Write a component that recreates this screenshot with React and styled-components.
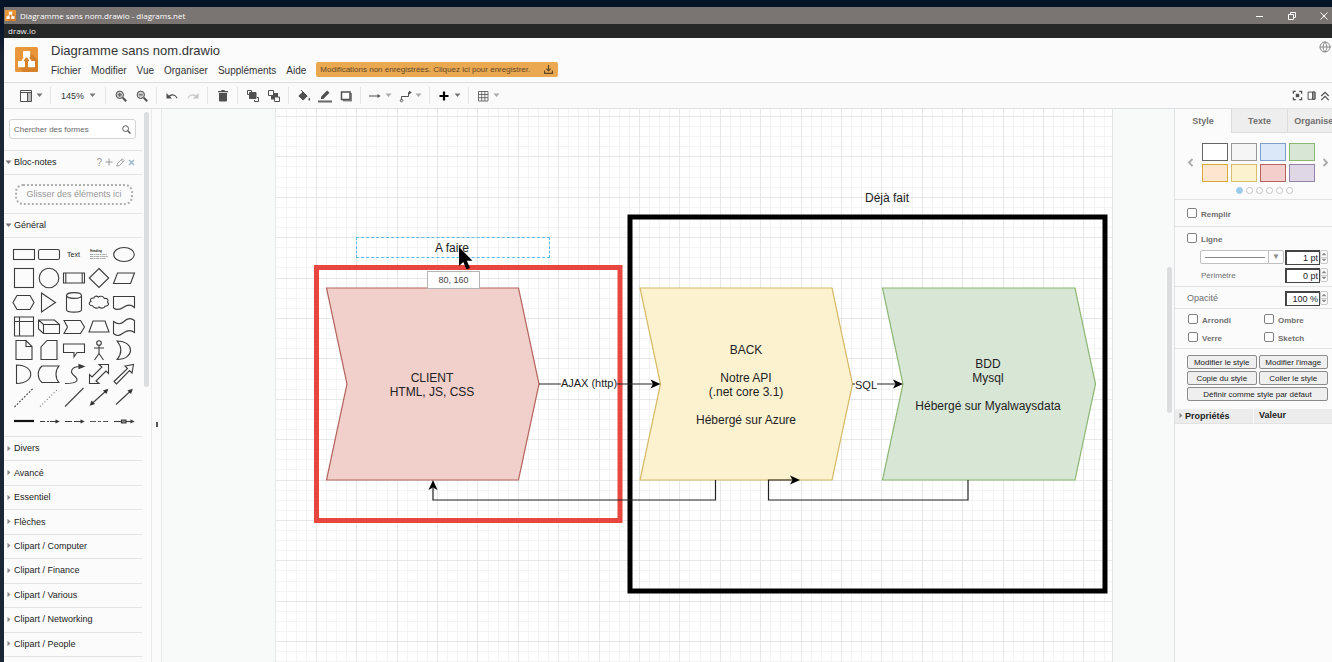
import React from 'react';
import styled, { createGlobalStyle } from 'styled-components';
import { Globe } from 'lucide-react';

const Global = createGlobalStyle`
  * { box-sizing: border-box; }
  html, body, #root { height: 100%; }
  body { margin: 0; overflow: hidden; background: #0a1626; }
  body, button, input, select { font-family: "Liberation Sans", Arial, sans-serif; }
  button { border: 0; background: none; padding: 0; color: inherit; font-size: inherit; }
  svg { display: block; flex: none; }
`;

/* ---------- window frame ---------- */

const Desktop = styled.div`
  display: flex;
  flex-direction: column;
  height: 100vh;
  padding: 7px 0 0 4px;
  overflow: hidden;
  background: linear-gradient(#061428 0, #061428 24px, #1c2636 60px);
`;

const TitleBar = styled.header`
  display: flex;
  align-items: center;
  flex: none;
  height: 17px;
  padding-left: 1px;
  background: #7a7573;
  color: #fff;
  font-family: "Open Sans", "Noto Sans", sans-serif;
  font-size: 8px;
`;

const WindowTitle = styled.span`
  flex: 1;
  margin-left: 4px;
  white-space: nowrap;
`;

const WindowButtons = styled.div`
  display: flex;
  margin-right: -8px;
`;

const WindowButton = styled.button`
  display: flex;
  align-items: center;
  justify-content: center;
  width: 32px;
  height: 17px;
`;

const AppBar = styled.div`
  display: flex;
  align-items: center;
  flex: none;
  height: 14px;
  padding: 0 0 2px 4px;
  background: #262828;
  color: #eee;
  font-family: "Open Sans", "Noto Sans", sans-serif;
  font-size: 8px;
`;

/* ---------- application header ---------- */

const Header = styled.div`
  display: flex;
  flex: none;
  height: 45px;
  padding: 0 1px 0 11px;
  background: #fbfbfc;
  border-bottom: 1px solid #dadce0;
`;

const LogoSlot = styled.div`
  padding-top: 9px;
  width: 36px;
`;

const HeaderText = styled.div`
  flex: 1;
  padding-top: 5px;
`;

const DocTitle = styled.h1`
  margin: 0;
  font-size: 13px;
  line-height: 16px;
  font-weight: 400;
  color: #333;
`;

const MenuBar = styled.nav`
  display: flex;
  align-items: center;
  gap: 10px;
  margin-top: 3px;
  height: 16px;
  font-size: 10px;
  color: #333;
`;

const SaveNotice = styled.button`
  display: flex;
  align-items: center;
  justify-content: space-between;
  width: 242px;
  height: 15px;
  margin-bottom: 2px;
  padding: 0 5px 0 4px;
  border-radius: 2px;
  background: #eaa851;
  color: #5f4828;
  font-size: 8px;
`;

const Language = styled.button`
  align-self: flex-start;
  margin-top: 3px;
  color: #8a8a8a;
`;

/* ---------- toolbar ---------- */

const Toolbar = styled.div`
  display: flex;
  align-items: center;
  flex: none;
  height: 26px;
  padding: 0 0 0 8px;
  background: #fafafa;
  border-bottom: 1px solid #dfe1e5;
  color: #505050;
`;

const ToolGroup = styled.div`
  display: flex;
  align-items: center;
  height: 17px;
  padding: 0 4px;
  border-right: ${(p) => (p.$last ? '0' : '1px solid #e4e4e4')};
`;

const ToolButton = styled.button`
  display: flex;
  align-items: center;
  justify-content: ${(p) => (p.$menu ? 'flex-start' : 'center')};
  gap: 2px;
  width: ${(p) => (p.$menu ? '30px' : '21px')};
  padding-left: ${(p) => (p.$menu ? '2px' : '0')};
  height: 17px;
  opacity: ${(p) => (p.$dim ? 0.3 : 1)};
`;

const ZoomButton = styled.button`
  display: flex;
  align-items: center;
  justify-content: space-between;
  width: 46px;
  padding: 0 5px 0 6px;
  font-size: 9px;
  line-height: 12px;
  color: #333;
`;

const ToolSpacer = styled.div`
  flex: 1;
`;

const ViewButton = styled.button`
  display: flex;
  align-items: center;
  justify-content: center;
  width: 14px;
`;

/* ---------- body ---------- */

const Body = styled.main`
  display: flex;
  flex: 1;
  min-height: 0;
`;

const Sidebar = styled.aside`
  display: flex;
  flex: none;
  width: 148px;
  background: #fbfbfb;
  border-right: 1px solid #e9e9e9;
`;

const SidebarList = styled.div`
  display: flex;
  flex-direction: column;
  width: 138px;
  font-size: 9px;
  color: #222;
`;

const ScrollThumb = styled.div`
  width: 5px;
  height: ${(p) => p.$length}px;
  margin: ${(p) => p.$top}px 0 0 2px;
  border-radius: 3px;
  background: #dcdddf;
`;

const SearchArea = styled.div`
  height: 42px;
  padding: 10px 6px 0 5px;
  border-bottom: 1px solid #e2e2e2;
`;

const SearchBox = styled.label`
  display: flex;
  align-items: center;
  height: 20px;
  padding: 0 4px;
  border: 1px solid #d4d4d4;
  border-radius: 3px;
  background: #fff;
  color: #555;
`;

const SearchInput = styled.input`
  flex: 1;
  min-width: 0;
  padding: 0;
  border: 0;
  outline: 0;
  background: none;
  font-size: 8px;
  &::placeholder { color: #666; opacity: 1; }
`;

const Section = styled.div`
  display: flex;
  align-items: center;
  flex: ${(p) => (p.$grow ? '1' : 'none')};
  height: ${(p) => (p.$grow ? 'auto' : '24px')};
  padding: 0 7px 1px 1px;
  border-bottom: 1px solid #e4e4e4;
`;

const SectionButton = styled.button`
  display: flex;
  align-items: center;
  flex: 1;
  gap: 2px;
  text-align: left;
`;

const SectionTools = styled.div`
  display: flex;
  align-items: center;
  gap: 3px;
  color: #999;
  font-size: 10px;
`;

const DropZone = styled.div`
  height: 39px;
  padding: 9px 9px 0 11px;
  border-bottom: 1px solid #e4e4e4;
`;

const DropHint = styled.div`
  height: 21px;
  border: 2px dotted #b0b0b0;
  border-radius: 8px;
  color: #999;
  line-height: 17px;
  text-align: center;
`;

const ShapeGrid = styled.div`
  display: grid;
  grid-template-columns: repeat(5, 25px);
  grid-auto-rows: 24px;
  padding: 4px 0 2px 7px;
  border-bottom: 1px solid #e4e4e4;
`;

const MoreSections = styled.div`
  display: flex;
  flex-direction: column;
  flex: 1;
  padding-bottom: 5px;
`;

const Splitter = styled.div`
  display: flex;
  align-items: center;
  justify-content: center;
  flex: none;
  width: 10px;
  padding-top: 77px;
  border-right: 1px solid #e9e9e9;
  background: #fbfbfb;
`;

const SplitterGrip = styled.span`
  width: 2px;
  height: 5px;
  background: #555;
`;

const Canvas = styled.section`
  display: flex;
  flex: 1;
  min-width: 0;
  overflow: hidden;
  background: #f8f9f9;
`;

const Gutter = styled.div`
  display: flex;
  justify-content: flex-end;
  flex: ${(p) => p.$weight};
  padding-right: 2px;
`;

const Page = styled.div`
  position: relative;
  flex: 0 0 838px;
  overflow: hidden;
  background: #fff;
  border-right: 1px solid #e2e2e2;
`;

const NodeLabel = styled.div`
  position: absolute;
  left: ${(p) => p.$x}px;
  top: ${(p) => p.$y}px;
  transform: translateX(-50%);
  color: #222;
  font-size: ${(p) => (p.$edge ? '11px' : '12px')};
  line-height: 14px;
  text-align: center;
  white-space: pre;
  background: ${(p) => (p.$edge ? '#fff' : 'none')};
`;

const DragOutline = styled.div`
  position: absolute;
  left: 81px;
  top: 128px;
  width: 194px;
  height: 21px;
  border: 1px dashed #5bbde8;
`;

const PositionHint = styled.div`
  position: absolute;
  left: 152px;
  top: 162px;
  width: 53px;
  height: 18px;
  border: 1px solid #b4b4b4;
  background: #fff;
  color: #444;
  font-size: 9px;
  line-height: 17px;
  text-align: center;
`;

const Pointer = styled.svg`
  position: absolute;
  left: 183px;
  top: 137px;
`;

/* ---------- format panel ---------- */

const FormatPanel = styled.aside`
  flex: none;
  width: 158px;
  overflow: hidden;
  background: #fbfbfb;
  border-left: 1px solid #dfe1e5;
  color: #707070;
  font-size: 9px;
`;

const Tabs = styled.div`
  display: flex;
  height: 24px;
`;

const Tab = styled.button`
  flex: 0 0 56px;
  border: solid #dcdcdc;
  border-width: ${(p) => (p.$active ? '0' : '0 0 1px 1px')};
  background: ${(p) => (p.$active ? '#fbfbfb' : '#eeeeee')};
  font-weight: 700;
  color: #707070;
`;

const Block = styled.div`
  padding: ${(p) => p.$pad || '0 4px 0 12px'};
  height: ${(p) => p.$h}px;
  border-bottom: 1px solid #e2e2e2;
`;

const Palette = styled.div`
  display: flex;
  align-items: center;
  justify-content: space-between;
`;

const Swatches = styled.div`
  display: grid;
  grid-template-columns: repeat(4, 26px);
  grid-auto-rows: 18px;
  gap: 3px;
`;

const Swatch = styled.button`
  border: 1px solid ${(p) => p.$line};
  background: ${(p) => p.$fill};
`;

const Dots = styled.div`
  display: flex;
  justify-content: center;
  gap: 3px;
  margin-top: 5px;
  padding-left: 12px;
`;

const Dot = styled.button`
  width: 7px;
  height: 7px;
  border: 1px solid ${(p) => (p.$on ? '#9bcbea' : '#c4c4c4')};
  border-radius: 50%;
  background: ${(p) => (p.$on ? '#9bcbea' : '#fff')};
`;

const Row = styled.div`
  display: flex;
  align-items: center;
  height: 18px;
`;

const Check = styled.label`
  display: flex;
  align-items: center;
  flex: 0 0 76px;
  gap: 4px;
  font-size: 8px;
  font-weight: 700;
`;

const CheckInput = styled.input`
  appearance: none;
  width: 10px;
  height: 10px;
  margin: 0 0 2px;
  border: 1px solid #808080;
  border-radius: 2px;
  background: #fff;
`;

const FieldLabel = styled.label`
  flex: 1;
  padding-left: ${(p) => (p.$indent ? '14px' : '0')};
  font-size: ${(p) => (p.$indent ? '8px' : '9px')};
`;

const LineSelect = styled.div`
  display: flex;
  align-items: center;
  flex: 1;
  height: 14px;
  margin: 0 1px 0 13px;
  border: 1px solid #c0c0c0;
  border-radius: 2px;
  background: #fff;
`;

const LineStyle = styled.select`
  flex: 1;
  min-width: 0;
  height: 12px;
  appearance: none;
  border: 0;
  border-right: 1px solid #c0c0c0;
  background: linear-gradient(#888, #888) center / 60px 1px no-repeat;
`;

const Caret = styled.span`
  width: 14px;
  color: #888;
  font-size: 8px;
  line-height: 10px;
  text-align: center;
`;

const NumberInput = styled.input`
  width: 35px;
  height: 15px;
  padding: 0 1px;
  border: solid #444;
  border-width: 2px 1px 1px 2px;
  background: #fff;
  color: #222;
  font-size: 9px;
  text-align: right;
`;

const Stepper = styled.div`
  display: flex;
  flex-direction: column;
  width: 8px;
  height: 14px;
  border: 1px solid #c8c8c8;
  border-radius: 2px;
`;

const Step = styled.button`
  display: flex;
  align-items: center;
  justify-content: center;
  flex: 1;
  & + & { border-top: 1px solid #d0d0d0; }
`;

const ActionGrid = styled.div`
  display: grid;
  grid-template-columns: 1fr 1fr;
  grid-auto-rows: 14px;
  gap: 2px;
  padding: 6px 4px 8px 12px;
`;

const Action = styled.button`
  grid-column: ${(p) => (p.$wide ? '1 / -1' : 'auto')};
  border: 1px solid #8c8c8c;
  border-radius: 2px;
  background: #efefef;
  color: #222;
  font-size: 8px;
  white-space: nowrap;
`;

const PropTable = styled.table`
  width: 100%;
  border-collapse: collapse;
  table-layout: fixed;
  color: #222;
  text-align: left;
  border-bottom: 1px solid #e2e2e2;
`;

const PropHead = styled.th`
  height: 14px;
  padding: 0 0 0 ${(p) => (p.$divided ? '5px' : '2px')};
  background: #ececec;
  border-left: ${(p) => (p.$divided ? '1px solid #f8f8f8' : '0')};
  font-size: 9px;
  line-height: 13px;
`;

const PropToggle = styled.button`
  display: flex;
  align-items: center;
  gap: 1px;
  font-weight: 700;
`;

/* ---------- icons ---------- */

const Down = ({ c = '#777' }) => (
  <svg width="7" height="5" viewBox="0 0 7 5"><path d="M0.5 .5h6L3.5 4z" fill={c} /></svg>
);
const Right = () => (
  <svg width="7" height="7" viewBox="0 0 7 7"><path d="M2.5 .8v5.4L5.4 3.5z" fill="#888" /></svg>
);
const Tiny = ({ up }) => (
  <svg width="6" height="4" viewBox="0 0 6 4"><path d={up ? 'M.5 3.2h5L3 .8z' : 'M.5 .8h5L3 3.2z'} fill="#888" /></svg>
);
const Icon = ({ children, size = 16, sw = 1 }) => (
  <svg width={size} height={size} viewBox="0 0 16 16" fill="none" stroke="currentColor" strokeWidth={sw}>{children}</svg>
);

const Logo = ({ w, h }) => (
  <svg width={w} height={h} viewBox="0 0 23 25" preserveAspectRatio="none">
    <rect width="23" height="25" rx="1.5" fill="#e9963a" />
    <path d="M14.5 5 23 13v10.500q0 1.500-1.500 1.500H8.500L4 20l7-9z" fill="#d5802a" />
    <path d="M10.800 9 6 16M12.200 9l4.600 7" stroke="#fff" strokeWidth="1.700" />
    <rect x="8" y="4" width="7.200" height="6.500" rx=".8" fill="#fff" />
    <rect x="3" y="14" width="7" height="6.300" rx=".8" fill="#fff" />
    <rect x="13" y="14" width="7" height="6.300" rx=".8" fill="#fff" />
  </svg>
);

const PanelIcon = () => (
  <Icon><path d="M2.500 2.500h11v11h-11zM2.500 4.500h11" /><path d="M9.500 4.500v9" /><path d="M10 5h3v8h-3z" fill="#bbb" stroke="none" /></Icon>
);
const Lens = ({ plus }) => (
  <Icon><circle cx="6.800" cy="6.800" r="3.700" fill="#ccc" /><path d="m9.800 9.800 3.400 3.400" strokeWidth="2" /><path d={plus ? 'M4.800 6.800h4M6.800 4.800v4' : 'M4.800 6.800h4'} /></Icon>
);
const UndoIcon = ({ flip }) => (
  <Icon><g transform={flip ? 'translate(16 0) scale(-1 1)' : undefined} stroke="none" fill="currentColor"><path d="M2.500 5v5.500H8L6 8.500c2.500-1.800 5.300-.8 6.600 2l1-.4C12 6.500 8 5.200 4.900 7.400z" /></g></Icon>
);
const TrashIcon = () => (
  <Icon><path d="M4 5h8v7.500q0 1-1 1H5q-1 0-1-1zM3 2.900h3l.7-.9h2.600l.7.9h3V4.200H3z" fill="currentColor" stroke="none" /></Icon>
);
const FrontIcon = () => (
  <Icon><path d="M2.500 2.500h4v4h-4z" fill="#fafafa" /><path d="M4.500 4.500h6.500v6h-6.500z" fill="currentColor" /><path d="M9.500 12v1.500h4V9.500H12" /></Icon>
);
const BackIcon = () => (
  <Icon><path d="M5 5h7v6.500H5z" fill="currentColor" stroke="none" /><path d="M2.500 2.500h5v5h-5zM8.500 9h5v4.500h-5z" fill="#fafafa" /></Icon>
);
const FillIcon = () => (
  <Icon><path d="M2.800 8 7 4 11.200 8 7.200 12z" fill="currentColor" /><path d="M5 2l3 3" /><path d="M13.300 9.500q1.700 2.400 0 3.300-1.700-.9 0-3.300z" fill="currentColor" stroke="none" /></Icon>
);
const StrokeIcon = () => (
  <Icon><path d="M1 12.500h14v2H1z" fill="#666" stroke="none" /><path d="M4 11V8.800L10 2.500l2.500 2.200L6.300 11z" fill="currentColor" stroke="none" /></Icon>
);
const ShadowIcon = () => (
  <Icon><path d="M4 5h10v8.500H5z" fill="#888" stroke="none" /><path d="M3.500 4h8.500v7.500H3.500z" fill="#fff" strokeWidth="1.500" /></Icon>
);
const ArrowIcon = () => (
  <Icon><path d="M2 8h9" /><path d="m10.500 6 3 2-3 2z" fill="currentColor" stroke="none" /></Icon>
);
const ConnectorIcon = () => (
  <Icon><path d="M4.500 11.500V8.500h7v-4h2" /><circle cx="4.500" cy="12.500" r="1.200" /><path d="m12 2.500 2.800 2-2.800 2z" fill="currentColor" stroke="none" /></Icon>
);
const PlusIcon = () => (
  <Icon><path d="M8 3.500v9M3.500 8h9" stroke="#000" strokeWidth="2.200" /></Icon>
);
const TableIcon = () => (
  <Icon><path d="M3.500 3.500h9.500v9.500h-9.500zM3.500 6.500h9.500M3.500 9.700h9.500M6.700 3.500v9.500M9.900 3.500v9.500" strokeWidth=".8" /></Icon>
);
const FitIcon = () => (
  <Icon size={11} sw={1.800}><path d="M2 5.500V2h3.500M10.500 2H14v3.500M14 10.500V14h-3.500M5.500 14H2v-3.500" /><path d="M5.500 5.500h5v5h-5z" fill="currentColor" stroke="none" /></Icon>
);
const FormatIcon = () => (
  <Icon size={11} sw={1.400}><path d="M3 3h10v10.500H3z" /><path d="M9.500 3h3.500v10.500H9.500z" fill="#999" /></Icon>
);
const CollapseIcon = () => (
  <Icon size={12} sw={1.600}><path d="m3 8 5-5 5 5M3 13.500l5-5 5 5" /></Icon>
);

/* One entry per palette cell, drawn in a 25 x 24 box. */
const SHAPES = [
  <rect x="2.500" y="7.500" width="21" height="10" />,
  <rect x="2.500" y="7.500" width="21" height="10" rx="1.800" />,
  <text x="12.500" y="15" fontSize="7" textAnchor="middle" fill="#222" stroke="none">Text</text>,
  <g><text x="4" y="10" fontSize="3" fontWeight="700" fill="#222" stroke="none">Heading</text><path d="M4 12.500h17M4 14.500h18M4 16.500h16" stroke="#888" strokeWidth=".7" strokeDasharray="3 .6 2 .5" /></g>,
  <ellipse cx="13" cy="12.500" rx="10.300" ry="7" />,
  <rect x="3.500" y="2.500" width="19" height="19" />,
  <circle cx="13" cy="12" r="9.800" />,
  <path d="M2.500 7h21v10h-21zM4.800 7v10M21.200 7v10" />,
  <path d="m13 2.500 9.700 9.500-9.700 9.500L3.300 12z" />,
  <path d="M6.500 7h17l-4 10.500h-17z" />,
  <path d="M6 5.500h13l4 7-4 7H6l-4-7z" />,
  <path d="m5.500 3 14 9.500-14 9.500z" />,
  <g><path d="M5.500 5.500v14c0 3.500 15 3.500 15 0v-14" /><ellipse cx="13" cy="5.500" rx="7.500" ry="2.900" /></g>,
  <path d="M8 8c-3-.3-4.500 1.500-3 3.500-3 1-1.800 4.500 1.500 4.300 1.500 3 5.500 2.800 6.500 1.200 2.500 2 5.500 1 6-.8 3.500.2 4.500-2.500 2.500-4 1.500-2.500-.5-4.300-3-3.700C17 5.800 13.500 5.800 12.300 7.200 11 5.500 8 6 8 8z" />,
  <path d="M2.500 6.500h21v11c-4-3.500-7-3-10.500-.5s-7 3.500-10.500 1z" />,
  <path d="M3.500 3h19v19h-19zM3.500 7.500h19M8.500 3v19" />,
  <path d="M2.500 6h16l5 4.500v9h-16l-5-4.500zM2.500 6l5 4.500h16M7.500 10.500v9" />,
  <path d="M3 6.500h16.500l4 6.500-4 6.500H3L6.500 13z" />,
  <path d="M7 7h12l4 11H3z" />,
  <path d="M2.500 7.500c4 3 8 2.500 10.500 0s6.500-4 10.500-1v12c-4-3-7.500-2-10.500 0s-6.500 5-10.500 1z" />,
  <path d="M5 2.500h10l6 6v13H5zM15 2.500v6h6" />,
  <path d="M11 2.500h10v19H5V9z" />,
  <path d="M2.500 6h21v8.500h-7.500l-3 4.500v-4.500H2.500z" />,
  <g><circle cx="13" cy="5" r="2.300" /><path d="M13 7.500v8M8 10h10M13 15.500l-4.500 6.500M13 15.500l4.500 6.500" /></g>,
  <path d="M6 3c18 0 18 18.500 0 18.500 5-6 5-12.500 0-18.500z" />,
  <path d="M5.500 3c19 0 19 18.500 0 18.500z" />,
  <path d="M6 4h17c-4 4.500-4 12 0 16.500H6C1 16 1 8.500 6 4z" />,
  <g><path d="M4 21.500c14 0 14-4 9-8s-2-9 6-9" /><path d="m18 2.500 5 2-5 2z" fill="#333" /></g>,
  <path d="M3.500 21.500v-9l2.500 2.500L16 5l-3-2.500h9.500v9l-2.500-2.500-10 10 3 2.500z" />,
  <path d="M3 19.500 16.500 6.500 14 4l8.500-1.500L21 11l-2.500-2.500L5.500 22z" />,
  <path d="M3.500 21 22.500 2" strokeDasharray="1.800 1.600" />,
  <path d="M4 20.500 22 3" strokeDasharray="1 2.200" stroke="#777" />,
  <path d="M4 20.500 22.500 2" />,
  <g><path d="M6 17.500 20 5" /><path d="m4.500 19 1.200-3.600 2.400 2.400zM21.500 3.500l-1.200 3.600-2.400-2.400z" fill="#111" /></g>,
  <g><path d="M5 18.500 19 5.500" /><path d="m21 3.500-1.200 3.600-2.400-2.400z" fill="#111" /></g>,
  <path d="M3 11h20" strokeWidth="2.200" stroke="#111" />,
  <g><path d="M4 11.500h5M11 11.500h2M14 11.500h7" /><path d="m20 10.300 2.500 1.200-2.500 1.200z" fill="#111" /></g>,
  <g><path d="M4 11.500h7M13 11.500h8" /><path d="m20 10.300 2.500 1.200-2.500 1.200z" fill="#111" /></g>,
  <g><path d="M4 11.500h6M12 11.500h3M17 11.500h5" stroke="#555" /></g>,
  <g><path d="M3 11.500h18" /><path d="M10.500 10h4.500v3h-4.500zM20 10.300l2.500 1.200-2.500 1.200z" fill="#888" /></g>,
];

/* ---------- diagram ---------- */

const steps = (from, pitch, end) => {
  const out = [];
  for (let i = 0; from + i * pitch < end; i += 1) out.push({ at: Math.round(from + i * pitch) + 0.5, major: i % 4 === 0 });
  return out;
};

const GridLines = () => {
  const lines = [
    ...steps(0.4, 10.1, 840).map((l) => ({ ...l, d: `M${l.at} 0v1400` })),
    ...steps(-33.5, 10.1, 1400).map((l) => ({ ...l, d: `M0 ${l.at}h840` })),
  ];
  return (
    <g>
      <path d={lines.filter((l) => !l.major).map((l) => l.d).join('')} stroke="#f4f4f4" />
      <path d={lines.filter((l) => l.major).map((l) => l.d).join('')} stroke="#e6e7e7" />
    </g>
  );
};

const Diagram = () => (
  <svg width="837" height="1400" viewBox="0 0 837 1400" fill="none">
    <GridLines />
    <rect x="41.500" y="158.500" width="303.500" height="253" stroke="#e8473f" strokeWidth="5" />
    <rect x="355" y="108" width="475" height="374" stroke="#000" strokeWidth="5" />
    <path d="M51.500 179h192l20.500 96-20.500 96H51.500L72 275z" fill="#f1cfcb" stroke="#b5645f" strokeWidth="1.200" />
    <path d="M365 179h192l20.500 96-20.500 96H365l20.500-96z" fill="#fdf2d0" stroke="#d6b964" strokeWidth="1.200" />
    <path d="M607.500 179h192.500l20.500 96-20.500 96H607.500l20.500-96z" fill="#d8e7d5" stroke="#8cb775" strokeWidth="1.200" />
    <g stroke="#222" strokeWidth="1.200">
      <path d="M264 275h114M577.500 275h43M440.500 371v20H158v-12M693 371v20H493.500v-20h25" />
    </g>
    <g fill="#000">
      <path d="m385.500 275-10-4.500 2.500 4.500-2.500 4.500z" />
      <path d="m628 275-10-4.500 2.500 4.500-2.500 4.500z" />
      <path d="m158 371-4.500 10 4.500-2.500 4.500 2.500z" />
      <path d="m525 371-10-4.500 2.500 4.500-2.500 4.500z" />
    </g>
  </svg>
);

const LABELS = [
  { x: 157, y: 262, text: 'CLIENT\nHTML, JS, CSS' },
  { x: 471, y: 234, text: 'BACK\n\nNotre API\n(.net core 3.1)\n\nHébergé sur Azure' },
  { x: 713, y: 248, text: 'BDD\nMysql\n\nHébergé sur Myalwaysdata' },
  { x: 612, y: 82, text: 'Déjà fait' },
  { x: 177, y: 132, text: 'A faire' },
  { x: 314, y: 267, text: 'AJAX (http)', edge: true },
  { x: 591, y: 269, text: 'SQL', edge: true },
];

const COLLAPSED = ['Divers', 'Avancé', 'Essentiel', 'Flèches', 'Clipart / Computer', 'Clipart / Finance', 'Clipart / Various', 'Clipart / Networking', 'Clipart / People'];
const MENUS = ['Fichier', 'Modifier', 'Vue', 'Organiser', 'Suppléments', 'Aide'];
const COLORS = [
  ['#ffffff', '#666666'], ['#f5f5f5', '#999999'], ['#dae8f9', '#7f9fcb'], ['#d8e7d5', '#8cb775'],
  ['#fce6cf', '#d9a93a'], ['#fdf2d0', '#d8bd6a'], ['#f3cecb', '#b5645f'], ['#dfd6e6', '#9681a8'],
];

const NumberField = ({ id, value, label }) => (
  <>
    <NumberInput id={id} aria-label={label} defaultValue={value} />
    <Stepper>
      <Step aria-label="Augmenter"><Tiny up /></Step>
      <Step aria-label="Diminuer"><Tiny /></Step>
    </Stepper>
  </>
);

const CheckField = ({ children }) => (
  <Check><CheckInput type="checkbox" />{children}</Check>
);

const Tool = ({ label, icon, menu, dim, faint }) => (
  <ToolButton aria-label={label} $menu={menu} $dim={dim}>
    {icon}
    {menu && <Down c={faint ? '#aaa' : '#777'} />}
  </ToolButton>
);

const Shapes = () => (
  <Sidebar>
    <SidebarList>
      <SearchArea>
        <SearchBox>
          <SearchInput aria-label="Chercher des formes" placeholder="Chercher des formes" />
          <svg width="9" height="9" viewBox="0 0 9 9" fill="none" stroke="currentColor"><circle cx="3.600" cy="3.600" r="2.900" /><path d="m5.800 5.800 2.700 2.700" strokeWidth="1.500" /></svg>
        </SearchBox>
      </SearchArea>
      <Section>
        <SectionButton><Down />Bloc-notes</SectionButton>
        <SectionTools>
          <button aria-label="Aide">?</button>
          <button aria-label="Ajouter"><svg width="8" height="8" viewBox="0 0 8 8" stroke="#999"><path d="M4 .5v7M.5 4h7" /></svg></button>
          <button aria-label="Renommer"><svg width="9" height="9" viewBox="0 0 9 9" fill="none" stroke="#999"><path d="m.8 8.200.7-2.700L6.300.8 8.200 2.700 3.500 7.500zM5.200 2l1.800 1.800" strokeWidth=".9" /></svg></button>
          <button aria-label="Fermer"><svg width="7" height="7" viewBox="0 0 7 7" stroke="#9ab8d2" strokeWidth="1.500"><path d="m1 1 5 5M6 1 1 6" /></svg></button>
        </SectionTools>
      </Section>
      <DropZone><DropHint>Glisser des éléments ici</DropHint></DropZone>
      <Section><SectionButton><Down />Général</SectionButton></Section>
      <ShapeGrid>
        {SHAPES.map((shape, i) => (
          <svg key={i} width="25" height="24" viewBox="0 0 25 24" fill="none" stroke="#3c3c3c" strokeWidth="1.100">{shape}</svg>
        ))}
      </ShapeGrid>
      <MoreSections>
        {COLLAPSED.map((name) => (
          <Section key={name} $grow><SectionButton><Right />{name}</SectionButton></Section>
        ))}
      </MoreSections>
    </SidebarList>
    <ScrollThumb $top={3} $length={275} />
  </Sidebar>
);

const Format = () => (
  <FormatPanel>
    <Tabs>
      <Tab $active>Style</Tab>
      <Tab>Texte</Tab>
      <Tab>Organiser</Tab>
    </Tabs>
    <Block $h={67} $pad="10px 3px 0 12px">
      <Palette>
        <button aria-label="Précédent"><svg width="7" height="9" viewBox="0 0 7 9" fill="none" stroke="#aaa" strokeWidth="1.800"><path d="M5.500 1 2 4.500 5.500 8" /></svg></button>
        <Swatches>
          {COLORS.map(([fill, line]) => <Swatch key={fill} $fill={fill} $line={line} aria-label={fill} />)}
        </Swatches>
        <button aria-label="Suivant"><svg width="7" height="9" viewBox="0 0 7 9" fill="none" stroke="#aaa" strokeWidth="1.800"><path d="M1.500 1 5 4.500 1.500 8" /></svg></button>
      </Palette>
      <Dots>{[0, 1, 2, 3, 4, 5].map((n) => <Dot key={n} $on={n === 0} aria-label={`Palette ${n + 1}`} />)}</Dots>
    </Block>
    <Block $h={27} $pad="5px 4px 0 12px"><Row><CheckField>Remplir</CheckField></Row></Block>
    <Block $h={60} $pad="3px 4px 0 12px">
      <Row><CheckField>Ligne</CheckField></Row>
      <Row>
        <LineSelect>
          <LineStyle aria-label="Style de ligne"><option aria-label="Continu" /></LineStyle>
          <Caret>▼</Caret>
        </LineSelect>
        <NumberField label="Épaisseur" value="1 pt" />
      </Row>
      <Row><FieldLabel htmlFor="perimeter" $indent>Périmètre</FieldLabel><NumberField id="perimeter" value="0 pt" /></Row>
    </Block>
    <Block $h={22} $pad="2px 4px 0 12px">
      <Row><FieldLabel htmlFor="opacity">Opacité</FieldLabel><NumberField id="opacity" value="100 %" /></Row>
    </Block>
    <Block $h={40} $pad="2px 4px 0 13px">
      <Row><CheckField>Arrondi</CheckField><CheckField>Ombre</CheckField></Row>
      <Row><CheckField>Verre</CheckField><CheckField>Sketch</CheckField></Row>
    </Block>
    <ActionGrid>
      <Action>Modifier le style</Action>
      <Action>Modifier l'image</Action>
      <Action>Copie du style</Action>
      <Action>Coller le style</Action>
      <Action $wide>Définir comme style par défaut</Action>
    </ActionGrid>
    <PropTable>
      <thead>
        <tr>
          <PropHead><PropToggle><Right />Propriétés</PropToggle></PropHead>
          <PropHead $divided>Valeur</PropHead>
        </tr>
      </thead>
    </PropTable>
  </FormatPanel>
);

export default function App() {
  return (
    <Desktop>
      <Global />
      <TitleBar>
        <Logo w={11} h={11} />
        <WindowTitle>Diagramme sans nom.drawio - diagrams.net</WindowTitle>
        <WindowButtons>
          <WindowButton aria-label="Réduire"><svg width="8" height="8" viewBox="0 0 8 8" stroke="#fff"><path d="M0 4.500h7" /></svg></WindowButton>
          <WindowButton aria-label="Restaurer"><svg width="8" height="8" viewBox="0 0 8 8" stroke="#fff" fill="none"><path d="M.5 2.500h5v5h-5zM2.500 2V.5h5v5H6" /></svg></WindowButton>
          <WindowButton aria-label="Fermer"><svg width="8" height="8" viewBox="0 0 8 8" stroke="#fff"><path d="m.5.5 7 7M7.500.5l-7 7" /></svg></WindowButton>
        </WindowButtons>
      </TitleBar>
      <AppBar>draw.io</AppBar>
      <Header>
        <LogoSlot><Logo w={23} h={25} /></LogoSlot>
        <HeaderText>
          <DocTitle>Diagramme sans nom.drawio</DocTitle>
          <MenuBar>
            {MENUS.map((m) => <button key={m}>{m}</button>)}
            <SaveNotice>
              Modifications non enregistrées. Cliquez ici pour enregistrer.
              <svg width="9" height="9" viewBox="0 0 9 9" fill="none" stroke="currentColor" strokeWidth="1.200"><path d="M.6 5.500v2.900h7.800V5.500M4.500 0v5.500M2.300 3.600l2.200 2.200 2.200-2.200" /></svg>
            </SaveNotice>
          </MenuBar>
        </HeaderText>
        <Language aria-label="Langue"><Globe size={12} strokeWidth={2} /></Language>
      </Header>
      <Toolbar>
        <ToolGroup><Tool label="Affichage" icon={<PanelIcon />} menu /></ToolGroup>
        <ToolGroup><ZoomButton>145%<Down /></ZoomButton></ToolGroup>
        <ToolGroup><Tool label="Zoom avant" icon={<Lens plus />} /><Tool label="Zoom arrière" icon={<Lens />} /></ToolGroup>
        <ToolGroup><Tool label="Annuler" icon={<UndoIcon />} /><Tool label="Rétablir" icon={<UndoIcon flip />} dim /></ToolGroup>
        <ToolGroup><Tool label="Supprimer" icon={<TrashIcon />} /></ToolGroup>
        <ToolGroup><Tool label="Premier plan" icon={<FrontIcon />} /><Tool label="Arrière-plan" icon={<BackIcon />} /></ToolGroup>
        <ToolGroup>
          <Tool label="Remplissage" icon={<FillIcon />} />
          <Tool label="Couleur de ligne" icon={<StrokeIcon />} />
          <Tool label="Ombre" icon={<ShadowIcon />} />
        </ToolGroup>
        <ToolGroup><Tool label="Connexion" icon={<ArrowIcon />} menu faint /><Tool label="Points de passage" icon={<ConnectorIcon />} menu faint /></ToolGroup>
        <ToolGroup><Tool label="Insérer" icon={<PlusIcon />} menu /></ToolGroup>
        <ToolGroup $last><Tool label="Tableau" icon={<TableIcon />} menu faint /></ToolGroup>
        <ToolSpacer />
        <ViewButton aria-label="Plein écran"><FitIcon /></ViewButton>
        <ViewButton aria-label="Format"><FormatIcon /></ViewButton>
        <ViewButton aria-label="Réduire la barre"><CollapseIcon /></ViewButton>
      </Toolbar>
      <Body>
        <Shapes />
        <Splitter><SplitterGrip /></Splitter>
        <Canvas>
          <Gutter $weight={111} />
          <Page>
            <Diagram />
            {LABELS.map((l) => <NodeLabel key={l.text} $x={l.x} $y={l.y} $edge={l.edge}>{l.text}</NodeLabel>)}
            <DragOutline />
            <PositionHint>80, 160</PositionHint>
            <Pointer width="16" height="26" viewBox="0 0 16 26"><path d="M1 1v19l4.300-4 3.200 7.500 3.500-1.500-3.200-7.300h5.700z" fill="#000" /></Pointer>
          </Page>
          <Gutter $weight={59}><ScrollThumb $top={158} $length={146} /></Gutter>
        </Canvas>
        <Format />
      </Body>
    </Desktop>
  );
}
